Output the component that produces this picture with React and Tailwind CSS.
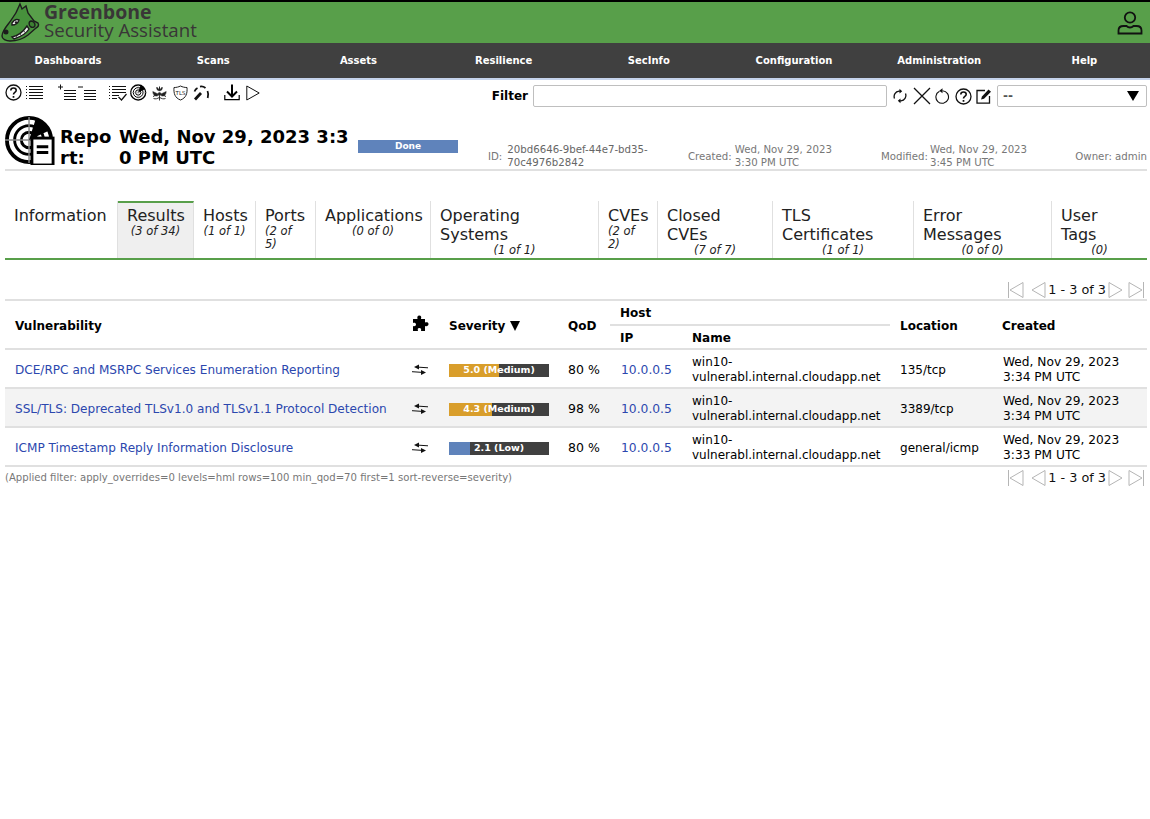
const FONT = "font-['DejaVu_Sans',Verdana,sans-serif]";

const NAV = ["Dashboards", "Scans", "Assets", "Resilience", "SecInfo", "Configuration", "Administration", "Help"];

const TABS = [
  { w: "w-[113px]", title: "Information" },
  { w: "w-[76px]", title: "Results", sub: "(3 of 34)", active: true },
  { w: "w-[62px]", title: "Hosts", sub: "(1 of 1)" },
  { w: "w-[60px]", title: "Ports", sub: "(2 of 5)", left: true },
  { w: "w-[115px]", title: "Applications", sub: "(0 of 0)" },
  { w: "w-[168px]", title: "Operating Systems", sub: "(1 of 1)" },
  { w: "w-[59px]", title: "CVEs", sub: "(2 of 2)", left: true },
  { w: "w-[115px]", title: "Closed CVEs", sub: "(7 of 7)" },
  { w: "w-[141px]", title: "TLS Certificates", sub: "(1 of 1)" },
  { w: "w-[138px]", title: "Error Messages", sub: "(0 of 0)" },
  { w: "w-[95px]", title: "User Tags", sub: "(0)", narrow: true },
];

const ROWS = [
  { name: "DCE/RPC and MSRPC Services Enumeration Reporting", sev: "5.0 (Medium)", pct: 50, color: "bg-[#d99e2b]", qod: "80 %", loc: "135/tcp", created: "3:34 PM UTC" },
  { name: "SSL/TLS: Deprecated TLSv1.0 and TLSv1.1 Protocol Detection", sev: "4.3 (Medium)", pct: 43, color: "bg-[#d99e2b]", qod: "98 %", loc: "3389/tcp", created: "3:34 PM UTC", alt: true },
  { name: "ICMP Timestamp Reply Information Disclosure", sev: "2.1 (Low)", pct: 21, color: "bg-[#5f83bb]", qod: "80 %", loc: "general/icmp", created: "3:33 PM UTC" },
];

function ListIcon({ prefix, check }) {
  return (
    <svg width="18" height="18" viewBox="0 0 18 18" fill="none" stroke="#111" strokeWidth="1">
      {prefix === "dots" && <path d="M0 2.500h1M0 5.500h1M0 8.500h1M0 11.500h1M0 14.500h1" />}
      {prefix === "plus" && <path d="M0 3h5M2.500 .5v5" />}
      {prefix === "minus" && <path d="M0 3h5" />}
      <path d={check ? "M3 2.500h14M3 5.500h14M3 8.500h14M3 11.500h7M3 14.500h5" : prefix === "dots" ? "M3 2.500h14M3 5.500h14M3 8.500h14M3 11.500h14M3 14.500h14" : "M6 6.500h12M6 9.500h12M6 12.500h12M6 15.500h12"} />
      {check && <path d="M9.500 13l3 3 5-6" strokeWidth="1.200" />}
    </svg>
  );
}

function HelpIcon() {
  return (
    <svg width="17" height="17" viewBox="0 0 17 17" fill="none" stroke="#111">
      <circle cx="8.500" cy="8.500" r="7.500" strokeWidth="1.300" />
      <path d="M5.800 6.500c0-1.700 1.200-2.500 2.700-2.500s2.700.9 2.700 2.300c0 2.200-2.700 2-2.700 4.200" strokeWidth="1.600" />
      <path d="M8.500 12v1.800" strokeWidth="1.700" />
    </svg>
  );
}

function RadarIcon({ size = 16, sheet }) {
  return (
    <svg width={size} height={size} viewBox="0 0 52 52" fill="none">
      <circle cx="25" cy="26" r="23" stroke="#000" strokeWidth="4" />
      <circle cx="25" cy="26" r="15" stroke="#000" strokeWidth="3" />
      <circle cx="25" cy="26" r="8" stroke="#000" strokeWidth="3" />
      <path d="M0 26h50M25 2v48" stroke="#888" strokeWidth="1.500" />
      <path d="M25 26L32 4a23 23 0 0 1 14 12z" fill="#000" />
      {sheet && (
        <g>
          <rect x="28" y="24" width="22" height="28" fill="#fff" stroke="#000" strokeWidth="3" />
          <path d="M33 33h12M33 39h12" stroke="#000" strokeWidth="3" />
        </g>
      )}
    </svg>
  );
}

function BiohazardIcon() {
  return (
    <svg width="15" height="16" viewBox="0 0 15 16" fill="#222" stroke="#222">
      <path d="M7.500 1.500v4M1 11.500l4-2M14 11.500l-4-2" strokeWidth="1" />
      <path d="M4.800 2c-.6 2 .5 3.800 2.700 3.800S10.800 4 10.200 2L7.500 5z" strokeWidth=".5" />
      <path d="M.8 6.500c0 3 2 5 4.700 4.500l.5-2z" strokeWidth=".5" />
      <path d="M14.200 6.500c0 3-2 5-4.700 4.500L9 9z" strokeWidth=".5" />
      <circle cx="7.500" cy="9" r="1.500" strokeWidth=".6" />
      <path d="M1.500 13.500c2 .8 4 .2 6-1.200 2 1.400 4 2 6 1.200M7.500 10.500v5" fill="none" strokeWidth=".9" />
    </svg>
  );
}

function TlsIcon() {
  return (
    <svg width="15" height="16" viewBox="0 0 15 16" fill="none" stroke="#222" strokeWidth="1">
      <path d="M1 2.500C3.500 2.500 5.500 2 7.500 1c2 1 4 1.500 6.500 1.500.5 6-1 10.500-6.500 12.500C2 13 .5 8.500 1 2.500z" />
      <text x="7.500" y="10" textAnchor="middle" fontSize="5.500" fill="#222" stroke="none" fontFamily="DejaVu Sans">TLS</text>
    </svg>
  );
}

function GaugeIcon() {
  return (
    <svg width="17" height="16" viewBox="0 0 17 16" fill="none" stroke="#111" strokeWidth="1.800">
      <path d="M1.500 6.500C2.100 5 3 3.800 4.500 3M7 1.600c2-.4 4 .2 5.500 1.400M14.500 6c1 2.200 1 4.500.2 7" />
      <path d="M2 14.500L8 8" strokeWidth="2.800" />
    </svg>
  );
}

function DownloadIcon() {
  return (
    <svg width="16" height="17" viewBox="0 0 16 17" fill="none" stroke="#000">
      <path d="M8 .5v11" strokeWidth="2" />
      <path d="M3 7.500l5 5 5-5" strokeWidth="2" />
      <path d="M.8 11v4.700h14.400V11" strokeWidth="1.200" />
    </svg>
  );
}

function PlayIcon() {
  return (
    <svg width="14" height="16" viewBox="0 0 14 16" fill="none" stroke="#111" strokeWidth="1">
      <path d="M.8 1v14l12.400-7z" />
    </svg>
  );
}

function RefreshIcon() {
  return (
    <svg width="14" height="16" viewBox="0 0 14 16" fill="none" stroke="#111" strokeWidth="1.300">
      <path d="M1.500 10.500C.2 7 2.500 3.500 6 3.200h2" />
      <path d="M6.500 .8L9.200 3.200 6.500 5.600z" fill="#111" stroke="none" />
      <path d="M12.500 5.500c1.300 3.500-1 7-4.500 7.300H6" />
      <path d="M7.500 10.400L4.800 12.800l2.700 2.400z" fill="#111" stroke="none" />
    </svg>
  );
}

function CloseIcon() {
  return (
    <svg width="18" height="18" viewBox="0 0 18 18" fill="none" stroke="#111" strokeWidth="1.300">
      <path d="M1 1l16 16M17 1L1 17" />
    </svg>
  );
}

function ResetIcon() {
  return (
    <svg width="15" height="16" viewBox="0 0 15 16" fill="none" stroke="#111" strokeWidth="1.100">
      <path d="M4.500 3.300a6.300 6.300 0 1 0 3-.6" />
      <path d="M7.500 .3L4.300 2.700l3.200 2.600z" fill="#111" stroke="none" />
    </svg>
  );
}

function EditIcon() {
  return (
    <svg width="16" height="16" viewBox="0 0 16 16" fill="none" stroke="#111">
      <path d="M9 2.500H1v12.700h12.500V8" strokeWidth="1.300" />
      <path d="M5 11.500l1-3L12.500 1.500l2.500 2.300L8 10.700z" fill="#111" stroke="none" />
    </svg>
  );
}

function PagerArrow({ dir, bar }) {
  const flip = dir === "right";
  return (
    <svg width="17" height="18" viewBox="0 0 17 18" fill="none" stroke="#b5b5b5" strokeWidth="1" className={flip ? "-scale-x-100" : ""}>
      {bar && <path d="M1.500 1v16" />}
      <path d="M16 1.500v15L3 9z" />
    </svg>
  );
}

function Pager() {
  return (
    <div className="flex items-center text-[12.800px] text-[#111]">
      <PagerArrow bar />
      <span className="ml-[5px]"><PagerArrow /></span>
      <span className="mx-[2px]">1 - 3 of 3</span>
      <PagerArrow dir="right" />
      <span className="ml-[3px]"><PagerArrow dir="right" bar /></span>
    </div>
  );
}

function SwapIcon() {
  return (
    <svg width="16" height="12" viewBox="0 0 16 12" fill="none" stroke="#111" strokeWidth="1">
      <path d="M4 3l12 .8" />
      <path d="M1 3l5-2.500v5z" transform="translate(1 0)" fill="#111" stroke="none" />
      <path d="M0 7.700l12 .8" />
      <path d="M14 8.500l-5-2.500v5z" fill="#111" stroke="none" />
    </svg>
  );
}

function PuzzleIcon() {
  return (
    <svg width="16" height="16" viewBox="0 0 16 16" fill="#000">
      <path d="M0 4h4.500C4 2 4.500 .5 6.300 .5S8.600 2 8 4h4v3.500c2-.6 3.500-.2 3.500 1.600S14 11.600 12 11v5H8c.5-1.800 0-3-1.700-3S4.500 14.200 5 16H0v-5c1.500.5 3 0 3-1.500S1.500 7.500 0 8z" />
    </svg>
  );
}

function Logo() {
  return (
    <svg width="40" height="41" viewBox="0 0 40 41" fill="none" stroke="#1d1d1d" strokeWidth="1.400">
      <path d="M19 2l2 5 4-3 2 7 6 8 4 2c1 2 0 4-2 5l-8 7c-5 4-12 6-18 6-4 0-8-2-8-5 0-4 3-8 7-13 3-4 7-8 11-19z" fill="#47913c" />
      <path d="M11 21c2-3 5-4 7-3-1 3-4 5-7 5z" fill="#fff" />
      <circle cx="15" cy="20.500" r="1.200" fill="#1d1d1d" stroke="none" />
      <path d="M11 35c5-1 11-5 15-11l2 3c-3 5-9 8-15 10z" fill="#f2f2f2" />
      <path d="M15 34l1.500 2M19 32l1.500 2M23 29l1.500 2" strokeWidth=".7" />
      <circle cx="5" cy="30" r="1.800" fill="#1d1d1d" />
      <path d="M30 19c2 0 4 2 4 4s-2 3-4 2-3-5 0-6z" fill="#3d8133" />
    </svg>
  );
}

function App() {
  return (
    <div className={`${FONT} min-h-[819px] bg-white text-[12px] text-black`}>
      <header className="flex h-[43px] items-center justify-between border-t-2 border-black bg-[#589f4a]">
        <div className="flex items-center pl-[1px]">
          <Logo />
          <div className="ml-[3px] flex flex-col pb-[4px] text-[#393637]">
            <span className="font-['Open_Sans',sans-serif] text-[19.500px] font-bold leading-[19px]">Greenbone</span>
            <span className="font-['Open_Sans',sans-serif] text-[18.700px] leading-[18px]">Security Assistant</span>
          </div>
        </div>
        <svg width="26" height="26" viewBox="0 0 26 26" fill="none" stroke="#111" strokeWidth="1.800" className="mr-[7px]">
          <circle cx="13" cy="7.500" r="5.200" />
          <path d="M1.500 23.500v-3c0-3 2-4.500 5-4.500h3c1 1 2 1.500 3.500 1.500s2.500-.5 3.500-1.500h3c3 0 5 1.500 5 4.500v3z" />
        </svg>
      </header>

      <nav className="flex h-[37px] overflow-hidden border-b-2 border-[#c5d3ec] bg-[#404040] text-[10px] font-bold text-white">
        {NAV.map((n, i) => (
          <div key={n} className={`flex w-[145.200px] shrink-0 items-center justify-center ${i === 0 ? "ml-[-4.500px]" : ""}`}>{n}</div>
        ))}
      </nav>

      <div className="flex h-[30px] items-center justify-between pl-[5px] pr-[3px]">
        <div className="flex items-center pb-[5px]">
          <HelpIcon />
          <span className="ml-[4px]"><ListIcon prefix="dots" /></span>
          <span className="ml-[14px]"><ListIcon prefix="plus" /></span>
          <span className="ml-[2px]"><ListIcon prefix="minus" /></span>
          <span className="ml-[13px]"><ListIcon prefix="dots" check /></span>
          <span className="ml-[3px]"><RadarIcon size={17} /></span>
          <span className="ml-[5px]"><BiohazardIcon /></span>
          <span className="ml-[6px]"><TlsIcon /></span>
          <span className="ml-[5px]"><GaugeIcon /></span>
          <span className="ml-[14px]"><DownloadIcon /></span>
          <span className="ml-[6px]"><PlayIcon /></span>
        </div>
        <div className="flex items-center pt-[2px]">
          <span className="mr-[5px] text-[12px] font-bold">Filter</span>
          <div className="h-[22px] w-[354px] rounded-[2px] border border-[#bfbfbf] bg-white" />
          <span className="ml-[6px]"><RefreshIcon /></span>
          <span className="ml-[6px]"><CloseIcon /></span>
          <span className="ml-[4px]"><ResetIcon /></span>
          <span className="ml-[5px]"><HelpIcon /></span>
          <span className="ml-[4px]"><EditIcon /></span>
          <div className="ml-[5px] flex h-[22px] w-[150px] items-center justify-between rounded-[2px] border border-[#bfbfbf] pl-[5px] pr-[7px]">
            <span className="text-[12px] font-bold text-[#555]">--</span>
            <span className="h-0 w-0 border-x-[6px] border-t-[10px] border-x-transparent border-t-black" />
          </div>
        </div>
      </div>

      <section className="ml-[5px] mr-[3px] flex h-[61px] items-center border-b-2 border-[#e0e0e0]">
        <RadarIcon size={50} sheet />
        <h1 className="mb-[1px] ml-[5px] w-[59px] self-end break-all text-[18px] font-bold leading-[21px]">Report:</h1>
        <div className="mb-[1px] w-[239px] self-end break-all text-[18px] font-bold leading-[21px]">Wed, Nov 29, 2023 3:30 PM UTC</div>
        <div className="mt-[30px] flex h-[13px] w-[100px] items-center justify-center self-start bg-[#5f83bb] text-[9px] font-bold text-white">Done</div>
        <div className="ml-[30px] flex flex-1 self-end text-[10.200px] leading-[13px] text-[#777]">
          <div className="flex w-[176px] items-center"><span>ID:</span><span className="ml-[5px] text-[#666]">20bd6646-9bef-44e7-bd35-70c4976b2842</span></div>
          <div className="ml-[24px] flex w-[168px] items-center"><span>Created:</span><span className="ml-[3px] w-[105px]">Wed, Nov 29, 2023 3:30 PM UTC</span></div>
          <div className="ml-[25px] flex w-[170px] items-center"><span>Modified:</span><span className="ml-[2px] w-[105px]">Wed, Nov 29, 2023 3:45 PM UTC</span></div>
          <div className="ml-auto mb-[6px] self-end whitespace-nowrap">Owner: admin</div>
        </div>
      </section>

      <div className="ml-[5px] mr-[3px] mt-[30px] flex h-[59px] border-b-2 border-[#589f4a]">
        {TABS.map((t, i) => (
          <div
            key={t.title}
            className={`${t.w} shrink-0 border-r border-[#e0e0e0] px-[9px] ${t.active ? "border-t-2 border-t-[#589f4a] bg-[#efefef] pt-[3px]" : "pt-[5px]"} ${i === TABS.length - 1 ? "border-r-0" : ""}`}
          >
            <div className={`text-[16px] leading-[19px] text-[#222] ${t.narrow ? "w-[50px]" : ""}`}>{t.title}</div>
            {t.sub && (
              <div className={`text-[11.500px] italic leading-[13px] text-[#222] ${t.left ? "text-left" : "text-center"}`}>{t.sub}</div>
            )}
          </div>
        ))}
      </div>

      <div className="mr-[5px] mt-[21px] flex h-[18px] justify-end"><Pager /></div>

      <table className="ml-[5px] w-[1142px] table-fixed border-collapse text-[12px]">
        <colgroup>
          <col className="w-[399px]" />
          <col className="w-[34px]" />
          <col className="w-[120px]" />
          <col className="w-[52px]" />
          <col className="w-[72px]" />
          <col className="w-[208px]" />
          <col className="w-[102px]" />
          <col className="w-[155px]" />
        </colgroup>
        <thead>
          <tr className="h-[25px] border-t-2 border-[#e0e0e0] font-bold">
            <th rowSpan={2} className="border-b-2 border-[#e0e0e0] pl-[10px] pt-[2px] text-left">Vulnerability</th>
            <th rowSpan={2} className="border-b-2 border-[#e0e0e0] pl-[9px] text-left"><span className="relative -top-[2px] block"><PuzzleIcon /></span></th>
            <th rowSpan={2} className="border-b-2 border-[#e0e0e0] pl-[11px] pt-[2px] text-left">
              <span className="flex items-center">Severity<span className="ml-[5px] h-0 w-0 border-x-[5px] border-t-[10px] border-x-transparent border-t-black" /></span>
            </th>
            <th rowSpan={2} className="border-b-2 border-[#e0e0e0] pl-[10px] pt-[2px] text-left">QoD</th>
            <th colSpan={2} className="border-b-2 border-[#e0e0e0] pl-[10px] text-left">Host</th>
            <th rowSpan={2} className="border-b-2 border-[#e0e0e0] pl-[10px] pt-[2px] text-left">Location</th>
            <th rowSpan={2} className="border-b-2 border-[#e0e0e0] pl-[10px] pt-[2px] text-left">Created</th>
          </tr>
          <tr className="h-[24px] font-bold">
            <th className="border-b-2 border-[#e0e0e0] pl-[10px] pt-[2px] text-left">IP</th>
            <th className="border-b-2 border-[#e0e0e0] pl-[10px] pt-[2px] text-left">Name</th>
          </tr>
        </thead>
        <tbody>
          {ROWS.map((r) => (
            <tr key={r.name} className={`h-[39px] border-b-2 border-[#e0e0e0] ${r.alt ? "bg-[#f3f3f3]" : ""}`}>
              <td className="whitespace-nowrap pl-[10px] pt-[4px] text-[12.080px] text-[#2b47ae]">{r.name}</td>
              <td className="pl-[8px] pt-[3px]"><SwapIcon /></td>
              <td className="pl-[11px] pt-[3px]">
                <div className="relative h-[13px] w-[100px] overflow-hidden bg-[#404040]">
                  <div className={`h-full ${r.color}`} style={{ width: `${r.pct}%` }} />
                  <span className="absolute inset-0 flex items-center justify-center text-[9.500px] font-bold text-white">{r.sev}</span>
                </div>
              </td>
              <td className="pl-[10px] pt-[4px] text-[12.500px]">{r.qod}</td>
              <td className="pl-[11px] pt-[4px] text-[12.300px] text-[#2b47ae]">10.0.0.5</td>
              <td className="pl-[10px] pt-[2px] leading-[15px]">win10-<br />vulnerabl.internal.cloudapp.net</td>
              <td className="pl-[10px] pt-[3px]">{r.loc}</td>
              <td className="pl-[11px] pt-[2px] text-[12.200px] leading-[15px]">Wed, Nov 29, 2023<br />{r.created}</td>
            </tr>
          ))}
        </tbody>
      </table>

      <div className="ml-[5px] mr-[5px] mt-[1px] flex items-center justify-between">
        <span className="text-[10.100px] text-[#777]">(Applied filter: apply_overrides=0 levels=hml rows=100 min_qod=70 first=1 sort-reverse=severity)</span>
        <Pager />
      </div>
    </div>
  );
}

export default App;
